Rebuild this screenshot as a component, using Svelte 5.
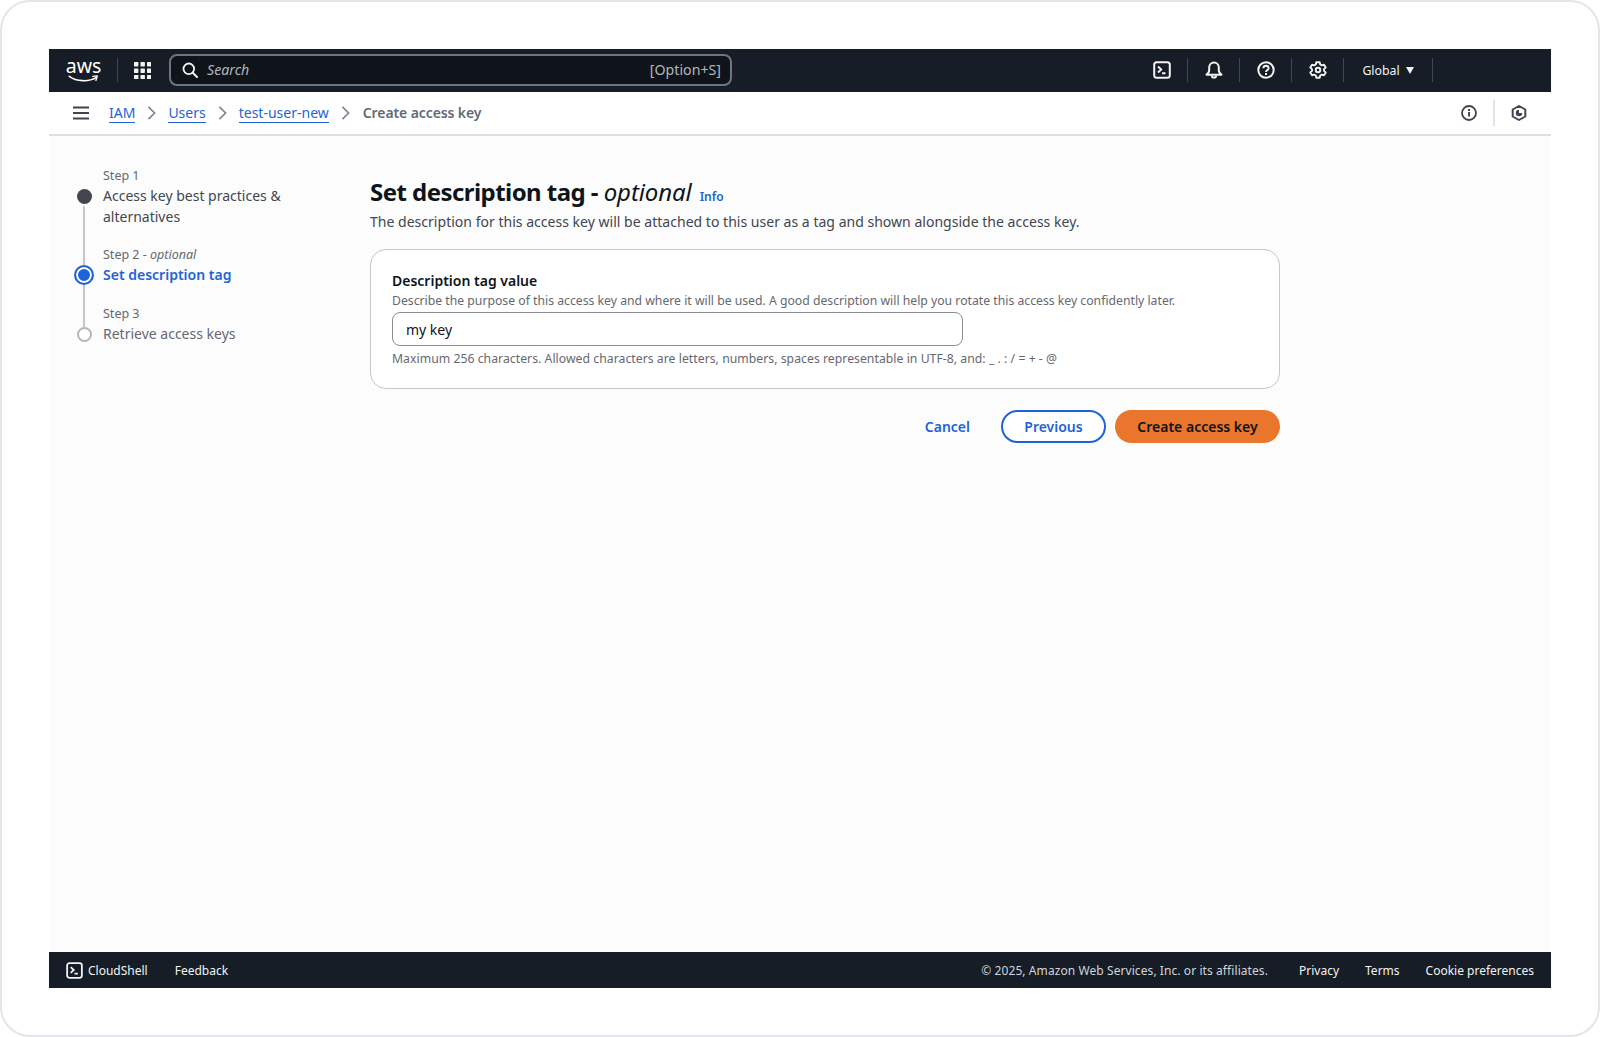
<script>
	const crumbs = ['IAM', 'Users', 'test-user-new'];
	const steps = [
		{ label: 'Step 1', title: 'Access key best practices & alternatives', state: 'done' },
		{ label: 'Step 2', optional: true, title: 'Set description tag', state: 'active' },
		{ label: 'Step 3', title: 'Retrieve access keys', state: 'todo' }
	];
</script>

<div class="frame">
	<header class="topnav">
		<div class="logo">
			<span class="logo-text">aws</span>
			<svg class="smile" viewBox="0 0 34 9" fill="none" aria-hidden="true">
				<path d="M1 1.500c8 6 22 6.500 30 1.500" stroke="#fff" stroke-width="1.800" stroke-linecap="round"/>
				<path d="M27.500 1.500l5-.5-1.500 5" stroke="#fff" stroke-width="1.600" stroke-linecap="round" stroke-linejoin="round"/>
			</svg>
		</div>
		<span class="nav-div logo-div"></span>
		<svg class="grid-icon" viewBox="0 0 17 17" aria-hidden="true">
			{#each [0, 6.500, 13] as y}
				{#each [0, 6.500, 13] as x}
					<rect x={x} y={y} width="4.400" height="4.400" rx="0.600" fill="#f2f3f3"/>
				{/each}
			{/each}
		</svg>
		<div class="search">
			<svg class="search-icon" viewBox="0 0 16 16" fill="none" aria-hidden="true">
				<circle cx="6.800" cy="6.800" r="5.300" stroke="#f2f3f3" stroke-width="1.800"/>
				<path d="M10.800 10.800l4.200 4.200" stroke="#f2f3f3" stroke-width="2" stroke-linecap="round"/>
			</svg>
			<span class="search-text">Search</span>
			<span class="search-key">[Option+S]</span>
		</div>
		<div class="nav-right">
			<span class="nav-btn">
				<svg class="nav-icon" viewBox="0 0 18 18" fill="none" aria-hidden="true">
					<rect x="1.200" y="1.200" width="15.600" height="15.600" rx="2.500" stroke="#f2f3f3" stroke-width="2"/>
					<path d="M5 5.500l3.200 3-3.200 3M9 12.200h3.500" stroke="#f2f3f3" stroke-width="1.900"/>
				</svg>
			</span>
			<span class="nav-div"></span>
			<span class="nav-btn">
				<svg class="nav-icon" viewBox="0 0 18 18" fill="none" aria-hidden="true">
					<path d="M1.500 13.700c1.800-1.200 2.700-2.600 2.700-4.700V6.300a4.800 4.800 0 0 1 9.600 0V9c0 2.100.9 3.500 2.700 4.700z" stroke="#f2f3f3" stroke-width="2" stroke-linejoin="round"/>
					<path d="M6.800 14.600c.2 2.700 4.200 2.700 4.400 0" stroke="#f2f3f3" stroke-width="1.900"/>
				</svg>
			</span>
			<span class="nav-div"></span>
			<span class="nav-btn">
				<svg class="nav-icon" viewBox="0 0 18 18" fill="none" aria-hidden="true">
					<circle cx="9" cy="9" r="7.700" stroke="#f2f3f3" stroke-width="2"/>
					<path d="M6.400 7.200c0-3.300 5.200-3.300 5.200 0 0 1.900-2.600 1.900-2.600 3.700" stroke="#f2f3f3" stroke-width="1.900"/>
					<rect x="8" y="12" width="2" height="2" fill="#f2f3f3"/>
				</svg>
			</span>
			<span class="nav-div"></span>
			<span class="nav-btn">
				<svg class="nav-icon" viewBox="0 0 18 18" fill="none" aria-hidden="true">
					<path d="M7.300 1.300h3.400l.5 2.200 1.600.9 2.200-.7 1.700 2.900-1.700 1.500v1.800l1.700 1.500-1.700 2.900-2.200-.7-1.600.9-.5 2.200H7.300l-.5-2.200-1.600-.9-2.200.7-1.700-2.900 1.700-1.500V8.100L1.300 6.600 3 3.700l2.200.7 1.600-.9z" stroke="#f2f3f3" stroke-width="1.900" stroke-linejoin="round"/>
					<circle cx="9" cy="9" r="2.300" stroke="#f2f3f3" stroke-width="1.900"/>
				</svg>
			</span>
			<span class="nav-div"></span>
			<span class="region">Global<i class="caret"></i></span>
			<span class="nav-div"></span>
		</div>
	</header>

	<div class="crumbbar">
		<svg class="menu-icon" viewBox="0 0 16 14" aria-hidden="true">
			<path d="M0 1.500h16M0 7h16M0 12.500h16" stroke="#3f4450" stroke-width="2"/>
		</svg>
		<nav class="crumbs">
			{#each crumbs as crumb}
				<a href="#top">{crumb}</a>
				<svg class="chev" viewBox="0 0 10 16" fill="none" aria-hidden="true">
					<path d="M1.500 1L8.500 8l-7 7" stroke="#7d8998" stroke-width="2"/>
				</svg>
			{/each}
			<span class="crumb-current">Create access key</span>
		</nav>
		<div class="crumb-tools">
			<svg class="tool-icon" viewBox="0 0 16 16" fill="none" aria-hidden="true">
				<circle cx="8" cy="8" r="7" stroke="#3f4450" stroke-width="1.800"/>
				<path d="M8 7v4.500" stroke="#3f4450" stroke-width="1.900"/>
				<rect x="7" y="4" width="2" height="2" fill="#3f4450"/>
			</svg>
			<span class="tool-div"></span>
			<svg class="tool-icon" viewBox="0 0 16 16" fill="none" aria-hidden="true">
				<path d="M8 1l6.300 3.500v7L8 15l-6.300-3.500v-7z" stroke="#3f4450" stroke-width="2" stroke-linejoin="round"/>
				<path d="M8 4.800A3.200 3.200 0 1 0 11.200 8H8z" fill="#3f4450"/>
			</svg>
		</div>
	</div>

	<main class="body">
		<ol class="stepper">
			{#each steps as step, i}
				<li class="step {step.state}">
					<div class="rail">
						<span class="seg top" class:hidden={i === 0}></span>
						<span class="dot"></span>
						<span class="seg bottom" class:hidden={i === steps.length - 1}></span>
					</div>
					<div class="step-text">
						<div class="step-label">{step.label}{#if step.optional}&nbsp;- <em>optional</em>{/if}</div>
						<div class="step-title">{step.title}</div>
					</div>
				</li>
			{/each}
		</ol>

		<section class="content">
			<div class="heading">
				<h1>Set description tag - <em>optional</em></h1>
				<a class="info" href="#top">Info</a>
			</div>
			<p class="lead">The description for this access key will be attached to this user as a tag and shown alongside the access key.</p>

			<div class="card">
				<div class="field-label">Description tag value</div>
				<div class="field-help">Describe the purpose of this access key and where it will be used. A good description will help you rotate this access key confidently later.</div>
				<input class="field-input" value="my key" aria-label="Description tag value"/>
				<div class="field-help constraint">Maximum 256 characters. Allowed characters are letters, numbers, spaces representable in UTF-8, and: _ . : / = + - @</div>
			</div>

			<div class="actions">
				<button class="btn link">Cancel</button>
				<button class="btn outline">Previous</button>
				<button class="btn primary">Create access key</button>
			</div>
		</section>
	</main>

	<footer class="footer">
		<svg class="foot-icon" viewBox="0 0 18 18" fill="none" aria-hidden="true">
			<rect x="1.200" y="1.200" width="15.600" height="15.600" rx="2.500" stroke="#f2f3f3" stroke-width="1.900"/>
			<path d="M5 5.500l3.200 3-3.200 3M9 12.200h3.500" stroke="#f2f3f3" stroke-width="1.900"/>
		</svg>
		<span class="foot-link cloudshell">CloudShell</span>
		<span class="foot-link feedback">Feedback</span>
		<div class="foot-right">
			<span class="copyright">© 2025, Amazon Web Services, Inc. or its affiliates.</span>
			<span class="foot-link">Privacy</span>
			<span class="foot-link">Terms</span>
			<span class="foot-link">Cookie preferences</span>
		</div>
	</footer>
</div>

<style>
	:global(body) {
		margin: 0;
		background: #fff;
		font-family: 'Noto Sans', 'Open Sans', sans-serif;
	}

	.frame {
		box-sizing: border-box;
		width: 1600px;
		height: 1037px;
		padding: 47px;
		border: 2px solid #e2e6eb;
		border-radius: 30px;
		display: flex;
		flex-direction: column;
		background: #fff;
	}

	.topnav {
		flex: none;
		box-sizing: border-box;
		height: 43px;
		background: #161d26;
		display: flex;
		align-items: center;
		padding: 0 0 1px 18px;
		color: #f2f3f3;
	}

	.logo {
		width: 33px;
		display: flex;
		flex-direction: column;
		align-items: center;
		height: 26px;
	}

	.logo-text {
		font-size: 19.500px;
		line-height: 18px;
		color: #fff;
	}

	.smile {
		width: 33px;
		height: 8px;
		flex: none;
	}

	.nav-div {
		width: 1px;
		height: 24px;
		background: #424650;
		flex: none;
	}

	.logo-div {
		margin-left: 17px;
	}

	.grid-icon {
		width: 17px;
		height: 17px;
		margin-left: 16px;
		flex: none;
	}

	.search {
		box-sizing: border-box;
		width: 563px;
		height: 32px;
		margin-left: 18px;
		border: 2px solid #6f747d;
		border-radius: 8px;
		background: #0f141a;
		display: flex;
		align-items: center;
		padding: 0 9px 1px 11px;
		font-size: 14.200px;
	}

	.search-icon {
		width: 16px;
		height: 16px;
		flex: none;
		margin-top: 1px;
	}

	.search-text {
		margin-left: 9px;
		font-style: italic;
		color: #b4b4bb;
	}

	.search-key {
		margin-left: auto;
		color: #b4b4bb;
	}

	.nav-right {
		margin-left: auto;
		display: flex;
		align-items: center;
		padding-right: 118px;
	}

	.nav-btn {
		width: 51px;
		display: flex;
		justify-content: center;
	}

	.nav-icon {
		width: 18px;
		height: 18px;
	}

	.region {
		width: 88px;
		display: flex;
		justify-content: center;
		align-items: center;
		font-size: 12.300px;
		color: #f2f3f3;
	}

	.caret {
		margin-left: 6px;
		width: 0;
		height: 0;
		border-left: 4.500px solid transparent;
		border-right: 4.500px solid transparent;
		border-top: 7px solid #f2f3f3;
	}

	.crumbbar {
		flex: none;
		height: 42px;
		background: #fff;
		border-bottom: 2px solid #dedee3;
		display: flex;
		align-items: center;
		padding-left: 24px;
		font-size: 14px;
	}

	.menu-icon {
		width: 16px;
		height: 14px;
		flex: none;
	}

	.crumbs {
		display: flex;
		align-items: center;
		margin-left: 20px;
	}

	.crumbs a {
		color: #1f63d8;
		text-decoration: none;
		border-bottom: 1px solid #1f63d8;
		line-height: 18px;
	}

	.chev {
		width: 9px;
		height: 14px;
		margin: 0 12px;
		flex: none;
	}

	.crumb-current {
		font-weight: 600;
		color: #5f6b7a;
		letter-spacing: -0.1px;
		line-height: 18px;
		margin: 0 0 1px 1px;
	}

	.crumb-tools {
		margin-left: auto;
		display: flex;
		align-items: center;
		padding-right: 24px;
	}

	.tool-icon {
		width: 16px;
		height: 16px;
		flex: none;
	}

	.tool-div {
		width: 2px;
		height: 26px;
		margin: 0 16px;
		background: #e4e4e8;
	}

	.body {
		flex: 1;
		min-height: 0;
		background: #fcfcfc;
		display: flex;
		padding: 31px 0 0 24px;
	}

	.stepper {
		list-style: none;
		margin: 0;
		padding: 0;
		width: 297px;
		flex: none;
		align-self: flex-start;
	}

	.step {
		display: flex;
		color: #414750;
	}

	.rail {
		width: 22px;
		flex: none;
		display: flex;
		flex-direction: column;
		align-items: center;
	}

	.seg {
		width: 2px;
		background: #c6c6cd;
	}

	.seg.top {
		height: 22px;
		flex: none;
	}

	.seg.bottom {
		flex: 1;
	}

	.seg.hidden {
		background: transparent;
	}

	.dot {
		box-sizing: border-box;
		flex: none;
		width: 15px;
		height: 15px;
		margin: 0 0 2px;
		border-radius: 50%;
		background: #424650;
	}

	.active .dot {
		width: 20px;
		height: 20px;
		margin: -3px 0 0;
		background: #1f63d8;
		border: 2px solid #1f63d8;
		box-shadow: inset 0 0 0 2px #fff;
	}

	.todo .dot {
		background: #fff;
		border: 2px solid #b4b4bb;
	}

	.step-text {
		padding-left: 8px;
		padding-bottom: 19px;
		width: 190px;
	}

	.active .step-text {
		padding-bottom: 20px;
	}

	.step-label {
		font-size: 12.500px;
		line-height: 18px;
		color: #656871;
	}

	.step-title {
		font-size: 14px;
		line-height: 21px;
	}

	.active .step-title {
		color: #1f63d8;
		font-weight: 600;
	}

	.todo .step-title {
		color: #656871;
	}

	.content {
		width: 910px;
		flex: none;
	}

	.heading {
		display: flex;
		align-items: baseline;
		margin-top: 10px;
	}

	h1 {
		margin: 0;
		font-size: 24px;
		line-height: 30px;
		font-weight: 700;
		color: #0f141a;
		letter-spacing: -0.55px;
	}

	h1 em {
		font-weight: 400;
		letter-spacing: -0.1px;
	}

	.info {
		margin-left: 8px;
		font-size: 12px;
		font-weight: 600;
		color: #1f63d8;
		text-decoration: none;
	}

	.lead {
		margin: 5px 0 0;
		font-size: 14px;
		line-height: 20px;
		color: #424650;
		letter-spacing: 0.02px;
	}

	.card {
		box-sizing: border-box;
		height: 140px;
		margin-top: 17px;
		padding: 21px 21px 0;
		background: #fff;
		border: 1px solid #c6c6cd;
		border-radius: 16px;
	}

	.field-label {
		font-size: 14px;
		line-height: 20px;
		font-weight: 600;
		color: #0f141a;
		margin-bottom: 2px;
	}

	.field-help {
		font-size: 12.230px;
		line-height: 16px;
		color: #656871;
	}

	.field-input {
		display: block;
		box-sizing: border-box;
		width: 571px;
		height: 34px;
		margin-top: 3px;
		padding: 0 13px;
		border: 1px solid #8c8c94;
		border-radius: 8px;
		background: #fff;
		font: inherit;
		font-size: 14px;
		color: #0f141a;
		outline: none;
	}

	.constraint {
		margin-top: 5px;
		letter-spacing: 0.035px;
	}

	.actions {
		display: flex;
		justify-content: flex-end;
		align-items: center;
		margin-top: 21px;
	}

	.btn {
		box-sizing: border-box;
		height: 33px;
		border-radius: 17px;
		font: inherit;
		font-size: 14px;
		font-weight: 600;
		cursor: pointer;
		padding: 0;
	}

	.link {
		background: none;
		border: none;
		color: #1f63d8;
		margin-right: 31px;
	}

	.outline {
		width: 105px;
		background: #fff;
		border: 2px solid #1f63d8;
		color: #1f63d8;
		margin-right: 9px;
	}

	.primary {
		width: 165px;
		background: #ea752c;
		border: none;
		color: #0f141a;
	}

	.footer {
		flex: none;
		height: 36px;
		background: #161d26;
		display: flex;
		align-items: center;
		padding: 0 17px;
		font-size: 12px;
		color: #f2f3f3;
	}

	.foot-icon {
		width: 17px;
		height: 17px;
		flex: none;
	}

	.cloudshell {
		margin-left: 5px;
	}

	.feedback {
		margin-left: 27px;
	}

	.foot-right {
		margin-left: auto;
		display: flex;
		align-items: center;
		gap: 26px;
	}

	.copyright {
		margin-right: 5px;
		color: #d1d5db;
		letter-spacing: 0.08px;
	}
</style>
